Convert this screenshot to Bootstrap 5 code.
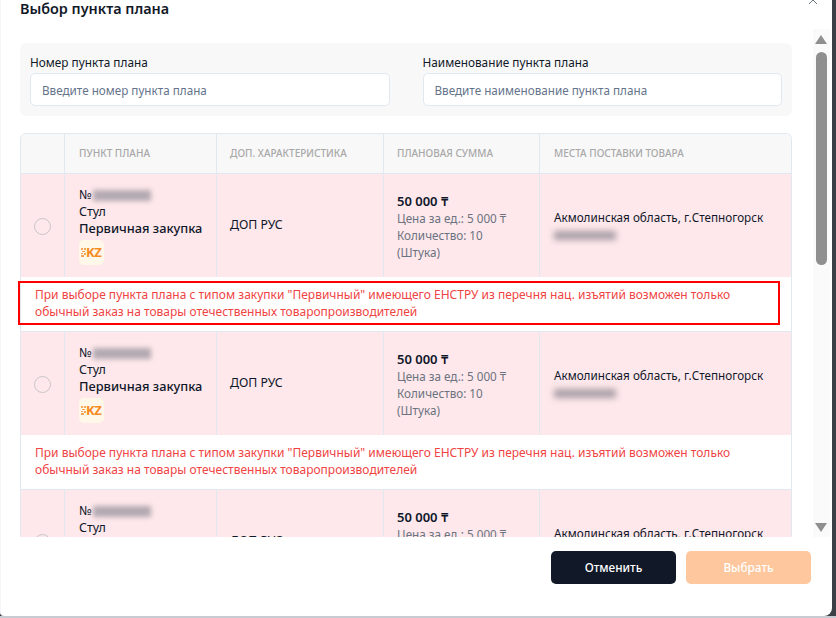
<!DOCTYPE html>
<html lang="ru"><head><meta charset="utf-8">
<link href="https://cdn.jsdelivr.net/npm/bootstrap@5.3.0/dist/css/bootstrap.min.css" rel="stylesheet">
<style>
html,body{height:100%;overflow:hidden}
body{background:linear-gradient(to top,#c8cbd2 2px,#3b3f46 2px);font-family:"Noto Sans",sans-serif;color:#0f172a;font-size:12.5px}
.shell{position:relative;width:832px;height:616px;background:#fff;border-radius:0 0 8px 4px;overflow:hidden;border-left:1px solid #f3f5f8}
.ttl{font-size:14.4px;font-weight:600;line-height:20px;margin:-1px 0 0;padding-left:19px;color:#111827;height:44px}
.xbtn{position:absolute;top:-5px;right:14px;width:10px;height:10px}
.scroller{height:494px;padding:0 40px 0 19px;overflow:hidden;position:relative}
.filt{background:#f8f8f9;border-radius:6px;height:73px;padding:11px 10px 10px;gap:33px}
.filt>div{flex:1 1 0}
.filt label{display:block;font-size:11.8px;line-height:17px;margin-bottom:2px;color:#111827}
.filt .form-control{height:33px;font-size:11.7px;padding:0 11px;border:1px solid #e2e8f0;border-radius:5px;font-family:inherit}
.filt .form-control::placeholder{color:#64748b;opacity:1}
.tblbox{border:1px solid #e2e8f0;border-bottom:0;border-radius:6px 6px 0 0;margin-top:17px;overflow:hidden}
.gridrow{display:grid;grid-template-columns:43px 152px 167px 156px 1fr}
.gridrow>div{border-left:1px solid #e2e8f0}
.gridrow>div:first-child{border-left:0}
.hd{height:40px;background:#f8f8f9;border-bottom:1px solid #e2e8f0;font-size:10px;font-weight:500;color:#a8a8a8;align-items:center}
.hd>div{height:100%;padding-left:14px;display:flex;align-items:center;text-transform:uppercase}
.dat{background:#fee8eb;height:103px}
.dat>div{padding-left:14px;display:flex;flex-direction:column;justify-content:center;line-height:17px}
.gridrow>div.nar{padding-left:13px}
.dat .rad{padding:0;align-items:center}
.circ{width:17px;height:17px;border:1px solid #c9c4c6;border-radius:50%;margin-top:1px}
.sm{color:#6b7280;font-size:11.7px}
.dat>div.price{padding-top:2px}
.amt{font-weight:600;font-size:13px}
.prim{font-size:12.8px;font-weight:500}
.addr{font-size:11.7px;margin-top:-2px}
.dopr{font-size:12.3px;padding-bottom:2px}
.dat>div.dopr{padding-bottom:2px}
.blur{display:inline-block;width:58px;height:11px;background:#b3a9b1;filter:blur(2.5px);vertical-align:middle;margin-left:1px}
.blur2{display:block;width:62px;height:9px;background:#a99fa7;filter:blur(3px);margin-top:5px}
.logo{width:25px;height:25px;background:#fff8e8;border-radius:5px;color:#f58a1f;font-weight:700;font-size:13px;line-height:25px;margin-top:3px;letter-spacing:-.5px;display:flex;align-items:center;padding-left:2px}
.logo svg{width:5px;height:9px;flex:none}
.warn{height:55px;padding:9px 20px 0 14px;color:#ef4444;font-size:12px;line-height:17px;background:#fff;border-bottom:1px solid #e2e8f0}
.mark-box{position:absolute;left:17px;top:281px;width:762px;height:44px;border:2px solid #f00;pointer-events:none}
.track{position:absolute;top:29px;right:2px;width:17px;height:508px;background:#fafafa}
.arrow-u,.arrow-d{position:absolute;left:2px;width:0;height:0;border-left:6.5px solid transparent;border-right:6.5px solid transparent}
.arrow-u{top:6px;border-bottom:9px solid #8f8f8f}
.arrow-d{bottom:5px;border-top:9px solid #8f8f8f}
.thumb{position:absolute;top:23px;left:3px;width:11px;height:213px;background:#8f8f8f;border-radius:6px}
.foot{height:77px;padding:14px 21px 0 0;justify-content:flex-end;gap:10px}
.bt{width:125px;height:33px;padding:0;border-radius:5px;font-size:11.8px;font-weight:500;border:0}
.bt-d{background:#111827;color:#fff}
.bt-o{--bs-btn-disabled-bg:#fec79d;--bs-btn-disabled-color:#fff;--bs-btn-disabled-opacity:1;background:#fec79d;color:#fff}
</style></head><body>
<div class="shell">
<h5 class="ttl">Выбор пункта плана</h5>
<svg class="xbtn" viewBox="0 0 10 10"><path d="M1 1l8 8M9 1l-8 8" stroke="#6b7280" stroke-width="1" fill="none"/></svg>
<div class="scroller">
<div class="filt d-flex">
<div><label>Номер пункта плана</label><input class="form-control" placeholder="Введите номер пункта плана"></div>
<div><label>Наименование пункта плана</label><input class="form-control" placeholder="Введите наименование пункта плана"></div>
</div>
<div class="tblbox">
<div class="gridrow hd"><div></div><div>Пункт плана</div><div class="nar">Доп. характеристика</div><div class="nar">Плановая сумма</div><div>Места поставки товара</div></div>

<div class="gridrow dat"><div class="rad"><span class="circ"></span></div>
<div><div>№<span class="blur"></span></div><div>Стул</div><div class="prim">Первичная закупка</div><div class="logo"><svg viewBox="0 0 5 9"><path d="M0 0h2v2H0zM3 0h2v2H3zM1 3h3v1H1zM0 5h2v1H0zM3 5h2v2H3zM0 7h3v2H0z" fill="#f5a35a"/></svg>KZ</div></div>
<div class="dopr nar">ДОП РУС</div>
<div class="price nar"><div class="amt">50 000 ₸</div><div class="sm">Цена за ед.: 5 000 ₸</div><div class="sm">Количество: 10</div><div class="sm">(Штука)</div></div>
<div><div class="addr">Акмолинская область, г.Степногорск</div><span class="blur2"></span></div></div>
<div class="warn">При выборе пункта плана с типом закупки "Первичный" имеющего ЕНСТРУ из перечня нац. изъятий возможен только обычный заказ на товары отечественных товаропроизводителей</div>

<div class="gridrow dat"><div class="rad"><span class="circ"></span></div>
<div><div>№<span class="blur"></span></div><div>Стул</div><div class="prim">Первичная закупка</div><div class="logo"><svg viewBox="0 0 5 9"><path d="M0 0h2v2H0zM3 0h2v2H3zM1 3h3v1H1zM0 5h2v1H0zM3 5h2v2H3zM0 7h3v2H0z" fill="#f5a35a"/></svg>KZ</div></div>
<div class="dopr nar">ДОП РУС</div>
<div class="price nar"><div class="amt">50 000 ₸</div><div class="sm">Цена за ед.: 5 000 ₸</div><div class="sm">Количество: 10</div><div class="sm">(Штука)</div></div>
<div><div class="addr">Акмолинская область, г.Степногорск</div><span class="blur2"></span></div></div>
<div class="warn">При выборе пункта плана с типом закупки "Первичный" имеющего ЕНСТРУ из перечня нац. изъятий возможен только обычный заказ на товары отечественных товаропроизводителей</div>

<div class="gridrow dat"><div class="rad"><span class="circ"></span></div>
<div><div>№<span class="blur"></span></div><div>Стул</div><div class="prim">Первичная закупка</div><div class="logo"><svg viewBox="0 0 5 9"><path d="M0 0h2v2H0zM3 0h2v2H3zM1 3h3v1H1zM0 5h2v1H0zM3 5h2v2H3zM0 7h3v2H0z" fill="#f5a35a"/></svg>KZ</div></div>
<div class="dopr nar">ДОП РУС</div>
<div class="price nar"><div class="amt">50 000 ₸</div><div class="sm">Цена за ед.: 5 000 ₸</div><div class="sm">Количество: 10</div><div class="sm">(Штука)</div></div>
<div><div class="addr">Акмолинская область, г.Степногорск</div><span class="blur2"></span></div></div>
</div>
</div>
<div class="mark-box"></div>
<div class="track"><span class="arrow-u"></span><span class="thumb"></span><span class="arrow-d"></span></div>
<div class="foot d-flex"><button class="btn bt bt-d">Отменить</button><button class="btn bt bt-o" disabled>Выбрать</button></div>
</div>
<script src="https://cdn.jsdelivr.net/npm/bootstrap@5.3.0/dist/js/bootstrap.bundle.min.js"></script>
</body></html>
